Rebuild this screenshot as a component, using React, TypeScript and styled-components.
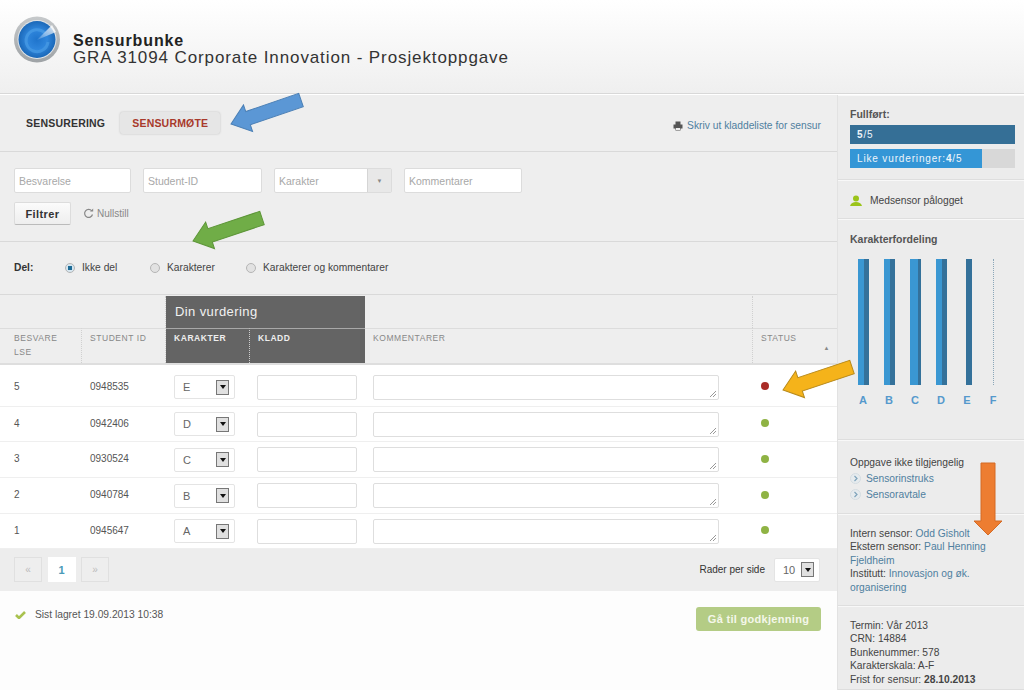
import styled, { createGlobalStyle } from "styled-components";

const GlobalStyle = createGlobalStyle`
    html, body {
        margin: 0;
        padding: 0;
        background: #fdfdfd;
    }
    body {
        font-family: "Liberation Sans", Arial, sans-serif;
        color: #444;
    }
`;
const COLS = "82px 84px 84px 115px 388px 84px";

const Page = styled.div`
    position: relative;
    width: 1024px;
    height: 690px;
    overflow: hidden;
`;
const Header = styled.header`
    height: 94px;
    box-sizing: border-box;
    padding: 16px 0 0 14px;
    display: flex;
    gap: 13px;
    background: linear-gradient(#ffffff, #efefef);
    border-bottom: 1px solid #d8d8d8;
`;
const TitleBlock = styled.div`
    padding-top: 16px;
    letter-spacing: 0.89px;
    font-size: 17px;
    line-height: 17px;
    color: #333;
`;
const Title = styled.div`
    font-size: 16px;
    font-weight: bold;
    color: #222;
`;
const Body = styled.div`
    display: flex;
    height: 595px;
    border-top: 1px solid #fff;
`;
const Main = styled.main`
    width: 837px;
    flex: none;
`;
const Band = styled.section<{ $h: number }>`
    height: ${(p) => p.$h}px;
    box-sizing: border-box;
    background: #eeeeee;
    border-bottom: 1px solid #d9d9d9;
`;
const TabBar = styled(Band)`
    display: flex;
    align-items: center;
    padding: 0 16px 0 14px;
`;
const Tab = styled.div<{ $active?: boolean }>`
    font-size: 10.5px;
    font-weight: bold;
    letter-spacing: 0.2px;
    padding: 5px 12px;
    margin-right: 3px;
    border-radius: 3px;
    color: ${(p) => (p.$active ? "#a8392b" : "#333")};
    background: ${(p) => (p.$active ? "#e6e6e6" : "transparent")};
    box-shadow: ${(p) => (p.$active ? "0 0 2px #bbb" : "none")};
`;
const PrintLink = styled.a`
    margin: 5px 0 0 auto;
    display: flex;
    align-items: center;
    gap: 4px;
    font-size: 10.25px;
    color: #4f7f9f;
`;
const FilterBand = styled(Band)`
    padding: 16px 14px 0;
`;
const FilterRow = styled.div`
    display: flex;
    gap: 12px;
`;
const FilterField = styled.div<{ $w: number }>`
    width: ${(p) => p.$w}px;
    height: 25px;
    box-sizing: border-box;
    background: #fff;
    border: 1px solid #dcdcdc;
    border-radius: 2px;
    padding-left: 4px;
    display: flex;
    align-items: center;
    justify-content: space-between;
    font-size: 10.5px;
    color: #a8a8a8;
`;
const DropTab = styled.div`
    width: 23px;
    height: 100%;
    border-left: 1px solid #d5d5d5;
    background: #e8e8e8;
    display: flex;
    align-items: center;
    justify-content: center;
    font-size: 6px;
    color: #888;
`;
const FilterActions = styled.div`
    display: flex;
    align-items: center;
    gap: 12px;
    margin-top: 9px;
`;
const FilterButton = styled.button`
    width: 57px;
    height: 23px;
    padding: 0;
    border: 1px solid #dcdcdc;
    border-bottom-color: #bbb;
    border-radius: 2px;
    background: linear-gradient(#fbfbfb, #eeeeee);
    font-family: inherit;
    font-size: 11px;
    font-weight: bold;
    letter-spacing: 0.4px;
    color: #333;
`;
const ResetLink = styled.span`
    display: flex;
    align-items: center;
    gap: 3px;
    font-size: 10px;
    color: #888;
    margin-top: -1px;
`;
const ShareBand = styled(Band)`
    display: flex;
    align-items: center;
    padding: 0 14px 1px;
    font-size: 10.25px;
    color: #444;
`;
const ShareLabel = styled.b`
    width: 51px;
    color: #333;
`;
const RadioOption = styled.label<{ $w: number }>`
    width: ${(p) => p.$w}px;
    display: flex;
    align-items: center;
    gap: 7px;
`;
const RadioDot = styled.span<{ $on?: boolean }>`
    width: 10px;
    height: 10px;
    border-radius: 50%;
    box-sizing: border-box;
    border: 1px solid #b5b5b5;
    background: ${(p) => (p.$on ? "radial-gradient(#1d6b96 38%, #d6e6f0 45%)" : "#e2e2e2")};
`;
const HeadGrid = styled.div`
    display: grid;
    grid-template-columns: ${COLS};
    grid-template-rows: 32px 35px;
    background: #eeeeee;
    border-top: 1px solid #eee;
    border-bottom: 2px solid #dedede;
    box-sizing: content-box;
`;
const HeadTop = styled.div<{ $dark?: boolean; $dotted?: boolean }>`
    grid-column: ${(p) => (p.$dark ? "span 2" : "auto")};
    border-right: ${(p) => (p.$dotted ? "1px dotted #d0d0d0" : "none")};
    background: ${(p) => (p.$dark ? "#646464" : "transparent")};
    color: #f1f1f1;
    font-size: 13px;
    letter-spacing: 0.4px;
    padding: 8px 0 0 9px;
    box-sizing: border-box;
    white-space: nowrap;
`;
const HeadCell = styled.div<{ $dark?: boolean; $dotted?: boolean; $pad?: number }>`
    position: relative;
    box-sizing: border-box;
    border-top: 1px solid ${(p) => (p.$dark ? "#a8a8a8" : "#dcdcdc")};
    border-right: ${(p) => (p.$dotted ? `1px dotted ${p.$dark ? "#cfcfcf" : "#d0d0d0"}` : "none")};
    background: ${(p) => (p.$dark ? "#646464" : "transparent")};
    color: ${(p) => (p.$dark ? "#eee" : "#888")};
    font-size: 8.5px;
    font-weight: ${(p) => (p.$dark ? "bold" : "normal")};
    letter-spacing: 0.55px;
    line-height: 13.5px;
    padding: 3px 8px 0 ${(p) => p.$pad ?? 8}px;
    word-break: break-all;
`;
const SortMark = styled.span`
    position: absolute;
    right: 7px;
    top: 13px;
    font-size: 6px;
    color: #888;
`;
const Row = styled.div<{ $h: number; $first?: boolean }>`
    display: grid;
    grid-template-columns: ${COLS};
    height: ${(p) => p.$h}px;
    box-sizing: border-box;
    align-items: center;
    padding-top: ${(p) => (p.$first ? 3 : 0)}px;
    border-bottom: 1px solid #efefef;
    font-size: 10px;
    color: #555;
    background: #fff;
`;
const Cell = styled.div<{ $pad?: number }>`
    padding-left: ${(p) => p.$pad ?? 8}px;
`;
const TextCell = styled(Cell)`
    padding-bottom: 2px;
`;
const SelectBox = styled.div<{ $w: number }>`
    width: ${(p) => p.$w}px;
    height: 24px;
    box-sizing: border-box;
    background: #fff;
    border: 1px solid #e4e4e4;
    border-radius: 2px;
    display: flex;
    align-items: center;
    justify-content: space-between;
    padding: 0 5px 0 8px;
    font-size: 11px;
    color: #666;
`;
const SelectArrow = styled.span`
    width: 13px;
    height: 15px;
    box-sizing: border-box;
    border: 1px solid #777;
    background: #e0e0e0;
    display: flex;
    align-items: center;
    justify-content: center;
    &::after {
        content: "";
        border: 3px solid transparent;
        border-top: 4px solid #111;
        border-bottom: 0;
    }
`;
const TextBox = styled.div<{ $w: number }>`
    position: relative;
    width: ${(p) => p.$w}px;
    height: 25px;
    box-sizing: border-box;
    background: #fff;
    border: 1px solid #dedede;
    border-radius: 2px;
`;
const Grip = styled.svg`
    position: absolute;
    right: 1px;
    bottom: 1px;
`;
const StatusDot = styled.span<{ $color: string }>`
    display: block;
    width: 8px;
    height: 8px;
    border-radius: 50%;
    background: ${(p) => p.$color};
`;
const Pager = styled.div`
    height: 42px;
    box-sizing: border-box;
    background: #ededed;
    display: flex;
    align-items: center;
    padding: 0 17px 1px 14px;
    gap: 5.5px;
`;
const PageButton = styled.div<{ $current?: boolean }>`
    width: 28px;
    height: 25px;
    box-sizing: border-box;
    border: 1px solid ${(p) => (p.$current ? "#fff" : "#e0e0e0")};
    background: ${(p) => (p.$current ? "#fff" : "#eeeeee")};
    display: flex;
    align-items: center;
    justify-content: center;
    font-size: ${(p) => (p.$current ? "11px" : "10px")};
    font-weight: ${(p) => (p.$current ? "bold" : "normal")};
    color: ${(p) => (p.$current ? "#4a9ab8" : "#bbb")};
`;
const PageSize = styled.div`
    margin-left: auto;
    display: flex;
    align-items: center;
    gap: 9px;
    font-size: 10px;
    color: #333;
`;
const Footer = styled.div`
    display: flex;
    justify-content: space-between;
    align-items: flex-start;
    padding: 16px 16px 0 15px;
`;
const SavedNote = styled.div`
    display: flex;
    align-items: center;
    gap: 9px;
    font-size: 10.25px;
    color: #555;
    padding-top: 2px;
`;
const ApproveButton = styled.button`
    width: 125px;
    height: 24px;
    padding: 0;
    border: 0;
    border-radius: 3px;
    background: #b4cc85;
    color: #f4f7ea;
    font-family: inherit;
    font-size: 11px;
    font-weight: bold;
    letter-spacing: 0.3px;
`;
const Sidebar = styled.aside`
    width: 187px;
    flex: none;
    background: #ececec;
    border-left: 1px solid #e2e2e2;
    font-size: 10.25px;
    color: #444;
`;
const SideBlock = styled.div<{ $h: number; $pt: number }>`
    height: ${(p) => p.$h}px;
    box-sizing: border-box;
    padding: ${(p) => p.$pt}px 12px 0;
    border-bottom: 1px solid #dedede;
    border-top: 1px solid #f8f8f8;
    line-height: 13.4px;
`;
const SideHead = styled.div`
    font-weight: bold;
    color: #555;
    font-size: 10.5px;
`;
const Meter = styled.div<{ $mb?: number }>`
    height: 19px;
    width: 165px;
    margin-top: 4px;
    background: #d8d8d8;
    margin-bottom: ${(p) => p.$mb ?? 0}px;
`;
const MeterFill = styled.div<{ $bg: string }>`
    height: 100%;
    box-sizing: border-box;
    background: ${(p) => p.$bg};
    color: #eef5fa;
    font-size: 10px;
    letter-spacing: 0.85px;
    line-height: 19px;
    padding-left: 7px;
    white-space: nowrap;
`;
const OnlineRow = styled.div`
    display: flex;
    align-items: center;
    gap: 8px;
    padding-top: 1px;
`;
const Chart = styled.div`
    display: flex;
    margin-top: 13px;
    width: 156px;
`;
const ChartColumn = styled.div`
    width: 26px;
    display: flex;
    flex-direction: column;
    align-items: center;
`;
const BarTrack = styled.div`
    height: 126px;
    display: flex;
    align-items: center;
`;
const Bar = styled.div<{ $w: number; $split: number; $shift: number }>`
    width: ${(p) => p.$w}px;
    height: 126px;
    margin-left: ${(p) => p.$shift}px;
    background: linear-gradient(90deg, #3a97d2 ${(p) => p.$split}%, #34719a ${(p) => p.$split}%);
`;
const EmptyBar = styled.div`
    height: 126px;
    border-left: 1px dotted #8aa6b8;
`;
const BarLabel = styled.div`
    font-size: 11px;
    font-weight: bold;
    color: #5599cc;
    margin-top: 9px;
`;
const SideLink = styled.a`
    color: #4f7f9f;
`;
const LinkRow = styled.div`
    display: flex;
    align-items: center;
    gap: 5px;
    margin-top: 2.5px;
    color: #4f7f9f;
`;
const ArrowOverlay = styled.svg<{ $x: number; $y: number }>`
    position: absolute;
    left: ${(p) => p.$x}px;
    top: ${(p) => p.$y}px;
`;

const rows = [
    { nr: 5, id: "0948535", grade: "E", color: "#a92c27", h: 42 },
    { nr: 4, id: "0942406", grade: "D", color: "#8fb344", h: 35 },
    { nr: 3, id: "0930524", grade: "C", color: "#8fb344", h: 36 },
    { nr: 2, id: "0940784", grade: "B", color: "#8fb344", h: 36 },
    { nr: 1, id: "0945647", grade: "A", color: "#8fb344", h: 35 },
];
const bars = [
    { label: "A", w: 11, split: 55, shift: 0 },
    { label: "B", w: 11, split: 55, shift: 0 },
    { label: "C", w: 11, split: 70, shift: 0 },
    { label: "D", w: 11, split: 55, shift: 0 },
    { label: "E", w: 6, split: 0, shift: 4 },
];

function Logo() {
    return (
        <svg width="46" height="47" viewBox="0 0 46 47">
            <defs>
                <linearGradient id="logoRing" x1="0" y1="0" x2="0" y2="1">
                    <stop offset="0%" stopColor="#c6c9cb" />
                    <stop offset="100%" stopColor="#9fa3a6" />
                </linearGradient>
                <radialGradient id="logoBlue" cx="50%" cy="50%" r="50%">
                    <stop offset="0%" stopColor="#1f74cc" />
                    <stop offset="55%" stopColor="#2f86dc" />
                    <stop offset="100%" stopColor="#1b68b8" />
                </radialGradient>
                <linearGradient id="logoBeam" x1="0" y1="1" x2="1" y2="0">
                    <stop offset="0%" stopColor="#ffffff" stopOpacity="0.1" />
                    <stop offset="100%" stopColor="#ffffff" stopOpacity="0.95" />
                </linearGradient>
            </defs>
            <circle cx="23" cy="23.5" r="23" fill="url(#logoRing)" />
            <circle cx="23" cy="23.5" r="19.5" fill="#dfe4e8" />
            <circle cx="23" cy="23.5" r="18.5" fill="url(#logoBlue)" />
            <path d="M31 17a11 11 0 1 0 3 9" fill="none" stroke="#4a9ce6" strokeWidth="3" opacity="0.7" />
            <path d="M23 24 L38 9 L42 16 Z" fill="url(#logoBeam)" />
        </svg>
    );
}

type ArrowProps = { tip: [number, number]; tail: [number, number]; head: number; half: number; fill: string; stroke: string };

function Arrow({ tip, tail, head, half, fill, stroke }: ArrowProps) {
    // drawn flat around the middle of the line, then turned from tip to tail
    const dx = tail[0] - tip[0];
    const dy = tail[1] - tip[1];
    const len = Math.hypot(dx, dy);
    const angle = (Math.atan2(dy, dx) * 180) / Math.PI;
    const size = Math.ceil(len) + 40;
    const c = size / 2;
    const x0 = c - len / 2;
    const x1 = c + len / 2;
    const d = `M${x0} ${c} L${x0 + head} ${c - half * 2} L${x0 + head} ${c - half} L${x1} ${c - half} L${x1} ${c + half} L${x0 + head} ${c + half} L${x0 + head} ${c + half * 2} Z`;
    return (
        <ArrowOverlay $x={(tip[0] + tail[0]) / 2 - c} $y={(tip[1] + tail[1]) / 2 - c} width={size} height={size}>
            <path d={d} fill={fill} stroke={stroke} strokeWidth="1" transform={`rotate(${angle} ${c} ${c})`} />
        </ArrowOverlay>
    );
}

function ResizeGrip() {
    return (
        <Grip width="8" height="8" viewBox="0 0 8 8">
            <path d="M1 7 L7 1 M4 7 L7 4" stroke="#999" strokeWidth="1" />
        </Grip>
    );
}

function LinkIcon() {
    return (
        <svg width="11" height="11" viewBox="0 0 11 11">
            <circle cx="5.5" cy="5.5" r="5" fill="#e6ebee" stroke="#d4dce1" />
            <path d="M4.5 3 L7 5.5 L4.5 8" fill="none" stroke="#7fa3bb" strokeWidth="1.2" />
        </svg>
    );
}

export default function App() {
    return (
        <Page>
            <GlobalStyle />
            <Header>
                <Logo />
                <TitleBlock>
                    <Title>Sensurbunke</Title>
                    GRA 31094 Corporate Innovation - Prosjektoppgave
                </TitleBlock>
            </Header>
            <Body>
                <Main>
                    <TabBar $h={57}>
                        <Tab>SENSURERING</Tab>
                        <Tab $active>SENSURMØTE</Tab>
                        <PrintLink>
                            <svg width="10" height="10" viewBox="0 0 10 10">
                                <path d="M2.5 0.5h5v3h-5z M0.5 3.5h9v4h-2v2h-5v-2h-2z" fill="#555" />
                                <path d="M3 7h4v2H3z" fill="#eee" />
                            </svg>
                            Skriv ut kladdeliste for sensur
                        </PrintLink>
                    </TabBar>
                    <FilterBand $h={90}>
                        <FilterRow>
                            <FilterField $w={117}>Besvarelse</FilterField>
                            <FilterField $w={119}>Student-ID</FilterField>
                            <FilterField $w={118}>
                                Karakter
                                <DropTab>▼</DropTab>
                            </FilterField>
                            <FilterField $w={118}>Kommentarer</FilterField>
                        </FilterRow>
                        <FilterActions>
                            <FilterButton>Filtrer</FilterButton>
                            <ResetLink>
                                <svg width="11" height="11" viewBox="0 0 11 11">
                                    <path d="M8.8 3A4 4 0 1 0 9.5 6.5" fill="none" stroke="#888" strokeWidth="1.2" />
                                    <path d="M7 3.4h3.2V0.4z" fill="#888" />
                                </svg>
                                Nullstill
                            </ResetLink>
                        </FilterActions>
                    </FilterBand>
                    <ShareBand $h={53}>
                        <ShareLabel>Del:</ShareLabel>
                        <RadioOption $w={85}>
                            <RadioDot $on />
                            Ikke del
                        </RadioOption>
                        <RadioOption $w={96}>
                            <RadioDot />
                            Karakterer
                        </RadioOption>
                        <RadioOption $w={200}>
                            <RadioDot />
                            Karakterer og kommentarer
                        </RadioOption>
                    </ShareBand>
                    <HeadGrid>
                        <HeadTop />
                        <HeadTop $dotted />
                        <HeadTop $dark>Din vurdering</HeadTop>
                        <HeadTop $dotted />
                        <HeadTop />
                        <HeadCell $dotted $pad={14}>
                            BESVARE
                            <br />
                            LSE
                        </HeadCell>
                        <HeadCell $dotted>STUDENT ID</HeadCell>
                        <HeadCell $dark $dotted>
                            KARAKTER
                        </HeadCell>
                        <HeadCell $dark>KLADD</HeadCell>
                        <HeadCell $dotted>KOMMENTARER</HeadCell>
                        <HeadCell>
                            STATUS
                            <SortMark>▲</SortMark>
                        </HeadCell>
                    </HeadGrid>
                    {rows.map((r, i) => (
                        <Row key={r.nr} $h={r.h} $first={i === 0}>
                            <TextCell $pad={14}>{r.nr}</TextCell>
                            <TextCell>{r.id}</TextCell>
                            <Cell>
                                <SelectBox $w={61}>
                                    {r.grade}
                                    <SelectArrow />
                                </SelectBox>
                            </Cell>
                            <Cell $pad={7}>
                                <TextBox $w={100} />
                            </Cell>
                            <Cell $pad={8}>
                                <TextBox $w={346}>
                                    <ResizeGrip />
                                </TextBox>
                            </Cell>
                            <TextCell $pad={8}>
                                <StatusDot $color={r.color} />
                            </TextCell>
                        </Row>
                    ))}
                    <Pager>
                        <PageButton>«</PageButton>
                        <PageButton $current>1</PageButton>
                        <PageButton>»</PageButton>
                        <PageSize>
                            Rader per side
                            <SelectBox $w={46}>
                                10
                                <SelectArrow />
                            </SelectBox>
                        </PageSize>
                    </Pager>
                    <Footer>
                        <SavedNote>
                            <svg width="11" height="9" viewBox="0 0 11 9">
                                <path d="M1 5 L4 8 L10 2" fill="none" stroke="#a9c24f" strokeWidth="2.6" />
                            </svg>
                            Sist lagret 19.09.2013 10:38
                        </SavedNote>
                        <ApproveButton>Gå til godkjenning</ApproveButton>
                    </Footer>
                </Main>
                <Sidebar>
                    <SideBlock $h={85} $pt={12}>
                        <SideHead>Fullført:</SideHead>
                        <Meter $mb={5}>
                            <MeterFill $bg="#356f96" style={{ width: "100%" }}>
                                <b>5</b>/5
                            </MeterFill>
                        </Meter>
                        <Meter>
                            <MeterFill $bg="#3496d6" style={{ width: "80%" }}>
                                Like vurderinger:<b>4</b>/5
                            </MeterFill>
                        </Meter>
                    </SideBlock>
                    <SideBlock $h={39} $pt={12}>
                        <OnlineRow>
                            <svg width="12" height="12" viewBox="0 0 12 12">
                                <circle cx="6" cy="3.5" r="3" fill="#9bc41a" />
                                <path d="M0 11c1-3 3-4 6-4s5 1 6 4z" fill="#9bc41a" />
                            </svg>
                            Medsensor pålogget
                        </OnlineRow>
                    </SideBlock>
                    <SideBlock $h={221} $pt={13}>
                        <SideHead>Karakterfordeling</SideHead>
                        <Chart>
                            {bars.map((b) => (
                                <ChartColumn key={b.label}>
                                    <BarTrack>
                                        <Bar $w={b.w} $split={b.split} $shift={b.shift} />
                                    </BarTrack>
                                    <BarLabel>{b.label}</BarLabel>
                                </ChartColumn>
                            ))}
                            <ChartColumn>
                                <BarTrack>
                                    <EmptyBar />
                                </BarTrack>
                                <BarLabel>F</BarLabel>
                            </ChartColumn>
                        </Chart>
                    </SideBlock>
                    <SideBlock $h={74} $pt={15}>
                        Oppgave ikke tilgjengelig
                        <LinkRow>
                            <LinkIcon />
                            Sensorinstruks
                        </LinkRow>
                        <LinkRow>
                            <LinkIcon />
                            Sensoravtale
                        </LinkRow>
                    </SideBlock>
                    <SideBlock $h={92} $pt={12}>
                        Intern sensor: <SideLink>Odd Gisholt</SideLink>
                        <br />
                        Ekstern sensor: <SideLink>Paul Henning</SideLink>
                        <br />
                        <SideLink>Fjeldheim</SideLink>
                        <br />
                        Institutt: <SideLink>Innovasjon og øk.</SideLink>
                        <br />
                        <SideLink>organisering</SideLink>
                    </SideBlock>
                    <SideBlock $h={84} $pt={12}>
                        Termin: Vår 2013
                        <br />
                        CRN: 14884
                        <br />
                        Bunkenummer: 578
                        <br />
                        Karakterskala: A-F
                        <br />
                        Frist for sensur: <b>28.10.2013</b>
                    </SideBlock>
                </Sidebar>
            </Body>
            <Arrow tip={[231, 124]} tail={[301, 100]} head={18} half={7} fill="#5b97d5" stroke="#4a7fb5" />
            <Arrow tip={[193, 241]} tail={[262, 218]} head={18} half={7} fill="#70ad47" stroke="#5d9638" />
            <Arrow tip={[783, 390]} tail={[852, 367]} head={18} half={7} fill="#f5b31a" stroke="#b88a1a" />
            <Arrow tip={[988, 535]} tail={[988, 463]} head={14} half={7} fill="#ed7d31" stroke="#d46b25" />
        </Page>
    );
}
